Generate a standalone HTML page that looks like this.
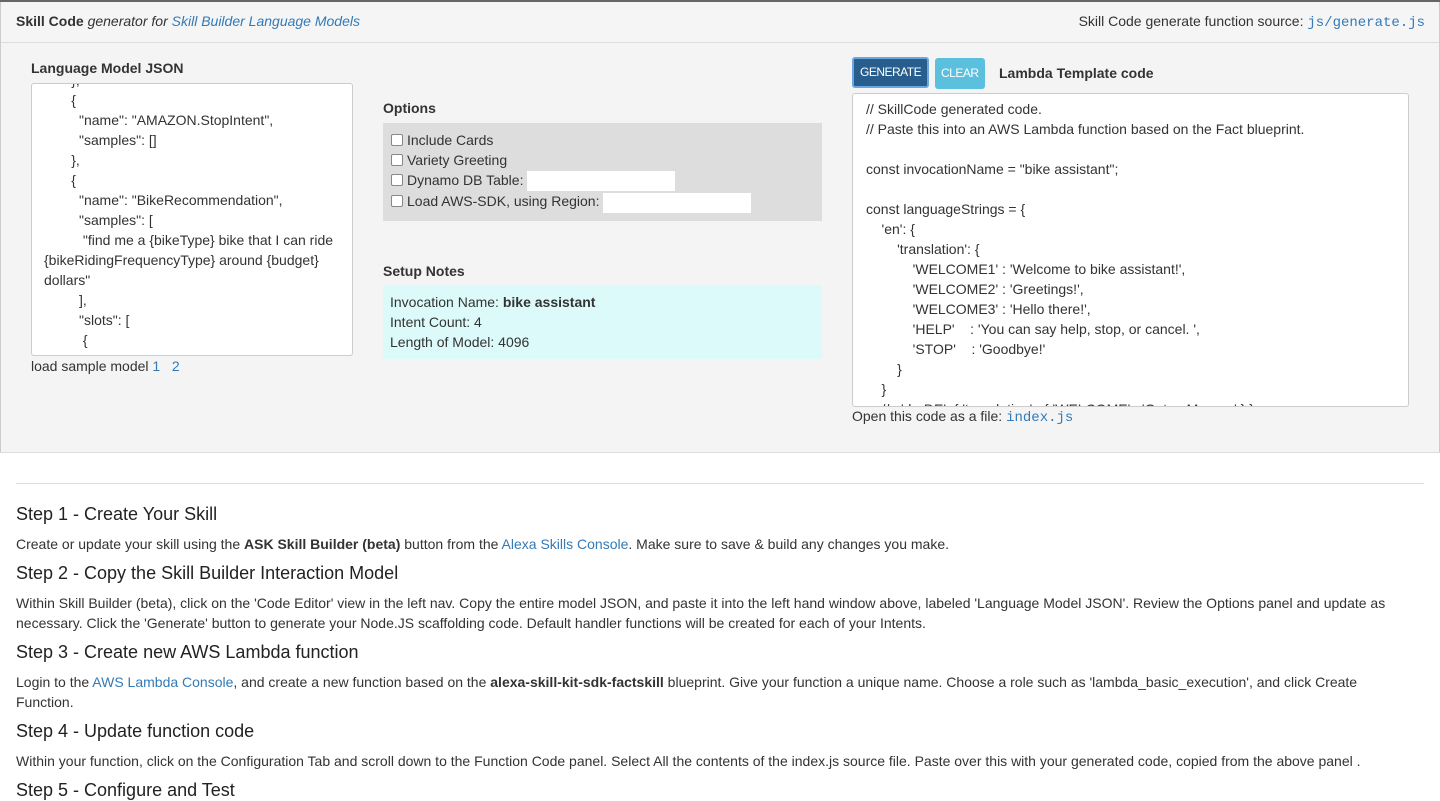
<!DOCTYPE html>
<html><head><meta charset="utf-8"><style>
*{box-sizing:border-box}
body{margin:0;width:1440px;height:797px;overflow:hidden;font-family:"Liberation Sans",Arial,sans-serif;font-size:14px;color:#333;background:#fff}
a{color:#337ab7;text-decoration:none}
code{font-family:"Liberation Mono",monospace;color:#337ab7;font-size:14px}
.top{position:absolute;left:0;top:0;width:1440px;height:453px;background:#f4f4f4;border-left:1px solid #ccc;border-right:1px solid #ccc;border-bottom:1px solid #ddd}
.line{position:absolute;left:0;top:0;width:1440px;height:2px;background:#666;z-index:2}
.hdr{position:absolute;left:0;top:0;width:100%;height:43px;border-bottom:1px solid #ddd;background:#f5f5f5}
.abs{position:absolute;white-space:nowrap}
.ta{position:absolute;background:#fff;border:1px solid #ccc;border-radius:3px;overflow:hidden;line-height:20px;white-space:pre}
h4{margin:0;font-size:14px;font-weight:bold}
.cb{display:inline-block;width:12px;height:12px;border:1px solid #888;border-radius:2px;background:#fff;vertical-align:-1px;margin-right:4px}
.inp{display:inline-block;width:148px;height:20px;background:#fff;vertical-align:middle}
.btn{position:absolute;height:31px;line-height:31px;color:#fff;font-size:12px;padding:0 6px;border-radius:3px;letter-spacing:-.5px}
.bot{position:absolute;left:16px;top:483px;width:1408px;border-top:1px solid #ddd}
.bot h3{font-size:18px;font-weight:normal;color:#222;margin:0;position:absolute;left:0}
.bot p{margin:0;position:absolute;left:0;width:1400px;line-height:20px}
</style></head><body>
<div class="line"></div>
<div class="top">
<div class="hdr">
<div class="abs" style="left:15px;top:13px"><b>Skill Code</b> <i>generator for</i> <a><i>Skill Builder Language Models</i></a></div>
<div class="abs" style="right:14px;top:13px">Skill Code generate function source: <code>js/generate.js</code></div>
</div>
<h4 class="abs" style="left:30px;top:60px">Language Model JSON</h4>
<div class="ta" style="left:30px;top:83px;width:322px;height:273px;padding-left:12px"><div style="margin-top:-14px">       },
       {
         "name": "AMAZON.StopIntent",
         "samples": []
       },
       {
         "name": "BikeRecommendation",
         "samples": [
          "find me a {bikeType} bike that I can ride
{bikeRidingFrequencyType} around {budget}
dollars"
         ],
         "slots": [
          {
            "name": "bikeType",</div></div>
<div class="abs" style="left:30px;top:358px">load sample model <a>1</a> &nbsp; <a>2</a></div>
<h4 class="abs" style="left:382px;top:100px">Options</h4>
<div class="abs" style="left:382px;top:123px;width:439px;height:98px;background:#ddd;line-height:20px;padding:7px 0 0 8px">
<div><span class="cb"></span>Include Cards</div>
<div><span class="cb"></span>Variety Greeting</div>
<div><span class="cb"></span>Dynamo DB Table: <span class="inp"></span></div>
<div><span class="cb"></span>Load AWS-SDK, using Region: <span class="inp"></span></div>
</div>
<h4 class="abs" style="left:382px;top:263px">Setup Notes</h4>
<div class="abs" style="left:382px;top:285px;width:439px;height:74px;background:#dcfafa;line-height:20px;padding:7px 0 0 7px">
<div>Invocation Name: <b>bike assistant</b></div><div>Intent Count: 4</div><div>Length of Model: 4096</div></div>
<div class="btn" style="left:851px;top:57px;background:#285e8e;border:2px solid #6aa6e0;line-height:27px">GENERATE</div>
<div class="btn" style="left:934px;top:58px;background:#5bc0de">CLEAR</div>
<h4 class="abs" style="left:998px;top:65px">Lambda Template code</h4>
<div class="ta" style="left:851px;top:93px;width:557px;height:314px;padding:5px 0 0 13px">// SkillCode generated code.
// Paste this into an AWS Lambda function based on the Fact blueprint.

const invocationName = "bike assistant";

const languageStrings = {
    'en': {
        'translation': {
            'WELCOME1' : 'Welcome to bike assistant!',
            'WELCOME2' : 'Greetings!',
            'WELCOME3' : 'Hello there!',
            'HELP'    : 'You can say help, stop, or cancel. ',
            'STOP'    : 'Goodbye!'
        }
    }
    // , 'de-DE': { 'translation' : { 'WELCOME' : 'Guten Morgen' } }</div>
<div class="abs" style="left:851px;top:408px">Open this code as a file: <code>index.js</code></div>
</div>
<div class="bot">
<h3 style="top:20px">Step 1 - Create Your Skill</h3>
<p style="top:50px">Create or update your skill using the <b>ASK Skill Builder (beta)</b> button from the <a>Alexa Skills Console</a>. Make sure to save &amp; build any changes you make.</p>
<h3 style="top:79px">Step 2 - Copy the Skill Builder Interaction Model</h3>
<p style="top:109px">Within Skill Builder (beta), click on the 'Code Editor' view in the left nav. Copy the entire model JSON, and paste it into the left hand window above, labeled 'Language Model JSON'. Review the Options panel and update as necessary. Click the 'Generate' button to generate your Node.JS scaffolding code. Default handler functions will be created for each of your Intents.</p>
<h3 style="top:158px">Step 3 - Create new AWS Lambda function</h3>
<p style="top:188px">Login to the <a>AWS Lambda Console</a>, and create a new function based on the <b>alexa-skill-kit-sdk-factskill</b> blueprint. Give your function a unique name. Choose a role such as 'lambda_basic_execution', and click Create Function.</p>
<h3 style="top:237px">Step 4 - Update function code</h3>
<p style="top:267px">Within your function, click on the Configuration Tab and scroll down to the Function Code panel. Select All the contents of the index.js source file. Paste over this with your generated code, copied from the above panel .</p>
<h3 style="top:296px">Step 5 - Configure and Test</h3>
</div>
</body></html>
